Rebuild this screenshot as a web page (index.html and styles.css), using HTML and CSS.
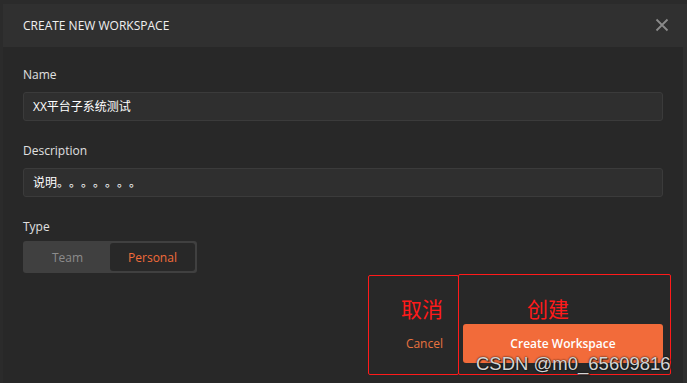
FILE: index.html
```html
<!DOCTYPE html>
<html lang="en">
<head>
    <meta charset="UTF-8">
    <meta name="viewport" content="width=device-width, initial-scale=1.0">
    <title>Create New Workspace</title>
    <link rel="stylesheet" href="styles.css">
</head>
<body>
    <div class="frame">
        <div class="modal-header">
            <span class="modal-title">CREATE NEW WORKSPACE</span>
            <svg class="close-icon" width="14" height="14" viewBox="0 0 14 14">
                <path d="M1.5 1.5 L12.5 12.5 M12.5 1.5 L1.5 12.5" stroke="#8a8a8a" stroke-width="1.8" fill="none"/>
            </svg>
        </div>
        <div class="modal-body">
            <div class="field">
                <label class="field-label">Name</label>
                <div class="text-input">XX平台子系统测试</div>
            </div>
            <div class="field">
                <label class="field-label">Description</label>
                <div class="text-input">说明。。。。。。。</div>
            </div>
            <div class="field">
                <label class="field-label">Type</label>
                <div class="toggle">
                    <span class="toggle-option">Team</span>
                    <span class="toggle-option active">Personal</span>
                </div>
            </div>
            <div class="actions">
                <button class="btn-cancel">Cancel</button>
                <button class="btn-create">Create Workspace</button>
            </div>

            <!-- annotations drawn over the screenshot -->
            <div class="mark mark-cancel"><span>取消</span></div>
            <div class="mark mark-create"><span>创建</span></div>
            <div class="watermark">CSDN @m0_65609816</div>
        </div>
    </div>
</body>
</html>
```

FILE: styles.css
```css
body {
    margin: 0;
    background-color: #2b2b2b;
    font-family: "Open Sans", "Noto Sans CJK SC", sans-serif;
    color: #e6e6e6;
}
.frame {
    width: 687px;
    height: 383px;
    padding: 4px 0 0 3px;
    box-sizing: border-box;
    display: flex;
    flex-direction: column;
    overflow: hidden;
}
.modal-header {
    height: 43px;
    flex-shrink: 0;
    background-color: #303030;
    display: flex;
    align-items: center;
    justify-content: space-between;
    padding: 0 18px 0 20px;
}
.modal-title {
    font-size: 12px;
    color: #f0f0f0;
    letter-spacing: 0;
}
.close-icon {
    display: block;
    margin-top: -1px;
}
.modal-body {
    flex: 1;
    position: relative;
    background-color: #282828;
    border-right: 4px solid #2f2f2f;
    padding: 20px 20px 0 20px;
}
.field {
    margin-bottom: 22px;
}
.field-label {
    display: block;
    font-size: 12px;
    line-height: 16px;
    color: #e0e0e0;
    margin-bottom: 9px;
}
.text-input {
    height: 27px;
    line-height: 27px;
    border: 1px solid #3b3b3b;
    border-radius: 3px;
    background-color: #2f2f2f;
    padding: 0 9px;
    font-size: 12px;
    color: #ffffff;
    text-spacing-trim: space-all;
}
.toggle {
    display: flex;
    width: 174px;
    height: 32px;
    box-sizing: border-box;
    padding: 2px;
    background-color: #404040;
    border-radius: 3px;
    margin-top: -3px;
}
.toggle-option {
    flex: 1;
    display: flex;
    align-items: center;
    justify-content: center;
    font-size: 12px;
    color: #8c8c8c;
    border-radius: 3px;
}
.toggle-option.active {
    background-color: #282828;
    color: #f26b3a;
}
.actions {
    display: flex;
    justify-content: flex-end;
    align-items: center;
    gap: 20px;
    margin-top: 51px;
}
.btn-cancel {
    background: none;
    border: none;
    padding: 0;
    font-family: "Open Sans", sans-serif;
    font-size: 12px;
    color: #e8733f;
}
.btn-create {
    width: 200px;
    height: 39px;
    border: none;
    border-radius: 3px;
    background-color: #f26b3a;
    font-family: "Open Sans", sans-serif;
    font-size: 12px;
    font-weight: 600;
    color: #ffffff;
}
.mark {
    position: absolute;
    box-sizing: border-box;
    border: 1px solid #ff1a1a;
    border-radius: 2px;
    display: flex;
}
.mark span {
    font-family: "Noto Sans CJK SC", sans-serif;
    font-size: 21px;
    line-height: 22px;
    color: #ff1a1a;
}
.mark-cancel {
    left: 365px;
    top: 228px;
    width: 91px;
    height: 100px;
    padding: 21px 0 0 32px;
}
.mark-create {
    left: 455px;
    top: 227px;
    width: 213px;
    height: 101px;
    padding: 22px 0 0 68px;
}
.watermark {
    position: absolute;
    left: 473px;
    top: 306px;
    font-family: "Liberation Sans", Arial, sans-serif;
    font-size: 18.5px;
    color: #d4d4d4;
    text-shadow: 0 0 2px #000, 1px 1px 1px #222;
}
```
